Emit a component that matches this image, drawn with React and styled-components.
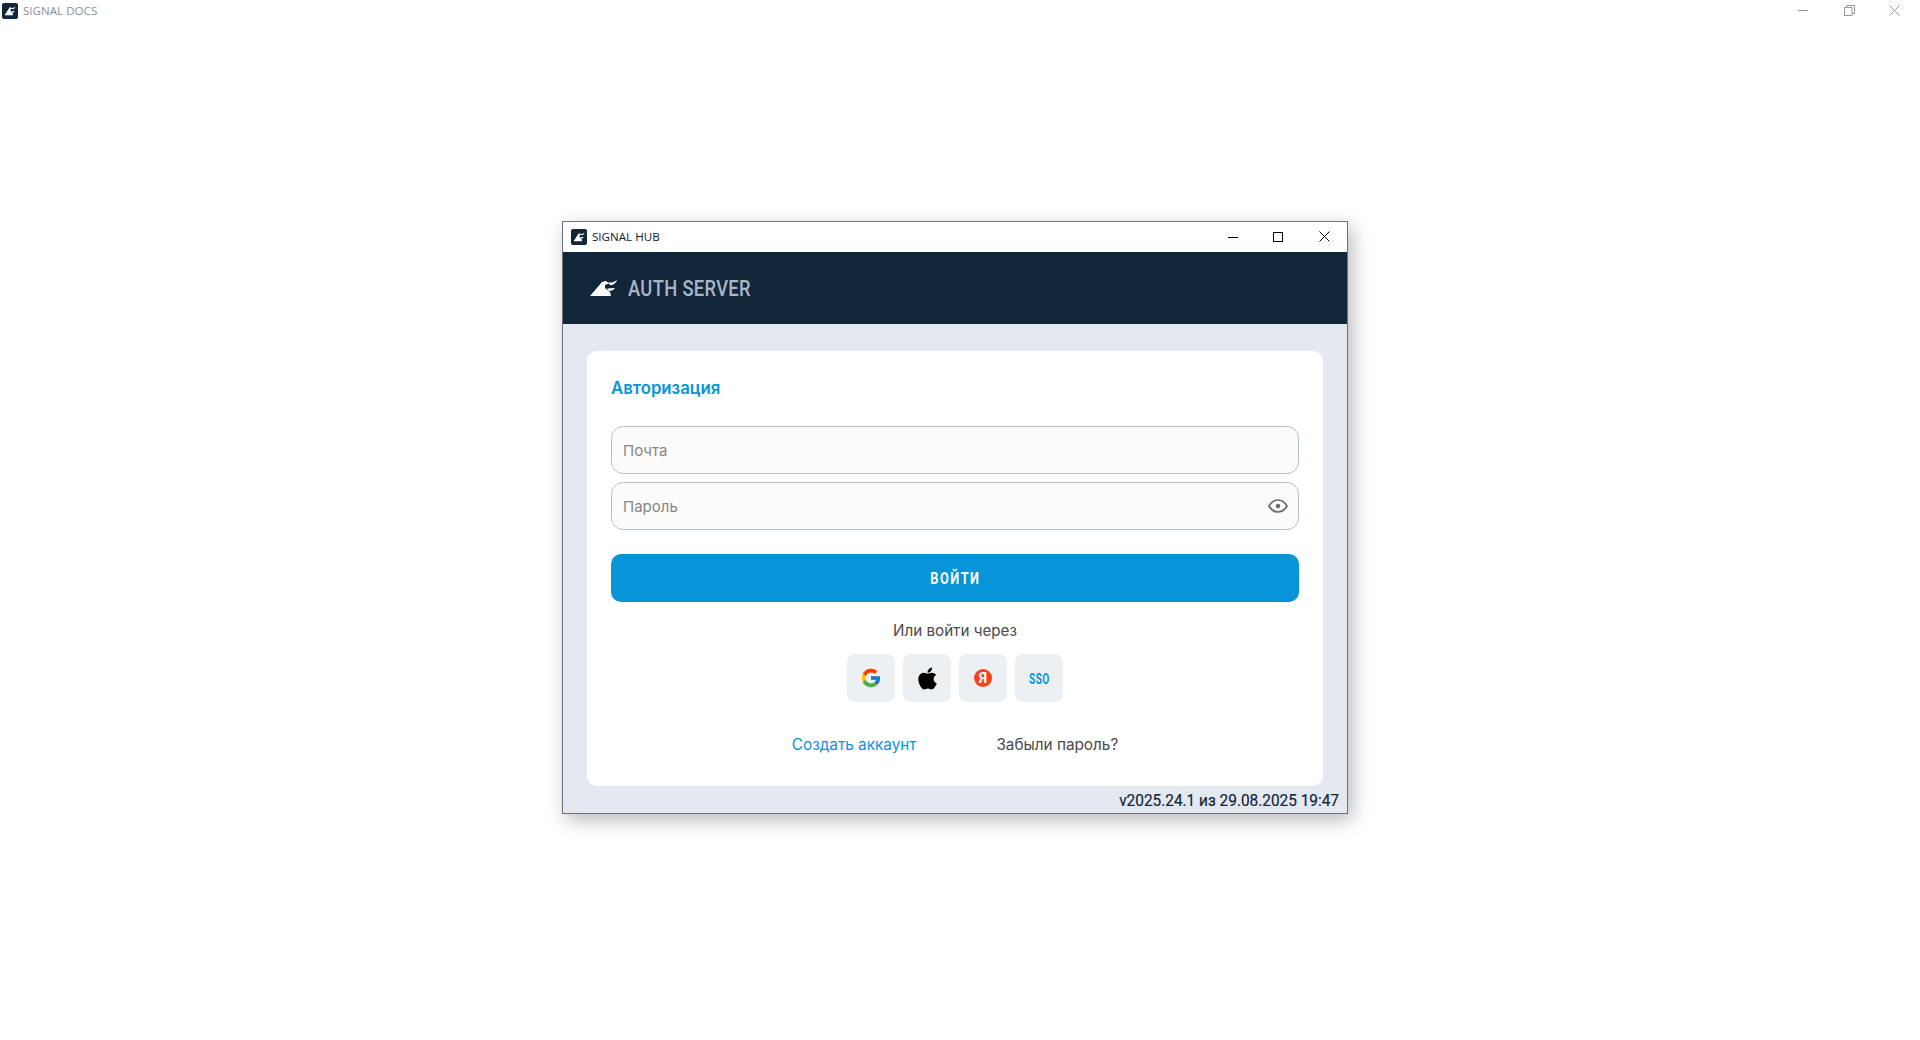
import React from 'react';
import styled, { createGlobalStyle } from 'styled-components';
import { FcGoogle } from 'react-icons/fc';
import { FaApple } from 'react-icons/fa';

const Global = createGlobalStyle`
  html, body { margin: 0; padding: 0; background: #fff; }
  * { box-sizing: border-box; }
  body { font-family: Inter, Roboto, "Noto Sans", sans-serif; }
`;

const Page = styled.div`
  width: 1920px;
  height: 1040px;
  display: flex;
  flex-direction: column;
  background: #fff;
  overflow: hidden;
`;

const OuterBar = styled.div`
  height: 21px;
  flex: none;
  display: flex;
  align-items: center;
  padding-left: 2px;
  gap: 5px;
`;

const OuterTitle = styled.span`
  font: 11.6px "Open Sans", sans-serif;
  color: #8a8f98;
`;

const OuterControls = styled.div`
  margin-left: auto;
  display: flex;
  height: 20px;
  padding-right: 2.5px;
`;

const OuterControl = styled.div`
  width: 45.5px;
  display: flex;
  align-items: center;
  justify-content: center;
  color: #9a9a9a;
`;

const Stage = styled.main`
  flex: 1;
  display: flex;
  justify-content: center;
  align-items: flex-start;
  padding: 200px 10px 0 0;
`;

const Win = styled.section`
  width: 786px;
  height: 593px;
  display: flex;
  flex-direction: column;
  border: 1px solid #6f7276;
  background: #e4e8f0;
  box-shadow: 4px 6px 18px rgba(0, 0, 0, 0.28);
`;

const WinBar = styled.div`
  height: 30px;
  flex: none;
  display: flex;
  align-items: center;
  padding: 0 0 1px 8px;
  gap: 5px;
  background: #fff;
`;

const WinTitle = styled.span`
  font: 11.6px "Open Sans", sans-serif;
  color: #10202f;
`;

const WinControls = styled.div`
  margin-left: auto;
  display: flex;
  height: 28px;
`;

const WinControl = styled.div`
  width: 46px;
  display: flex;
  align-items: center;
  justify-content: center;
  color: #000;
`;

const Brand = styled.header`
  height: 72px;
  flex: none;
  display: flex;
  align-items: center;
  padding-left: 27px;
  gap: 11px;
  background: #12263a;
`;

const BrandName = styled.h1`
  margin: 0;
  font: 500 22.5px Roboto, sans-serif;
  letter-spacing: 0.4px;
  color: #a9b6c6;
  white-space: nowrap;
  transform: scaleX(0.815);
  transform-origin: left center;
`;

const Body = styled.div`
  flex: 1;
  display: flex;
  flex-direction: column;
  padding: 27px 24px 0;
  min-height: 0;
`;

const Card = styled.div`
  width: 736px;
  height: 435px;
  flex: none;
  display: flex;
  flex-direction: column;
  padding: 25px 24px 24px;
  background: #fff;
  border-radius: 10px;
`;

const Heading = styled.h2`
  margin: 0 0 26px;
  height: 24px;
  font: 600 16.75px/24px Inter, sans-serif;
  color: #0795d8;
`;

const Field = styled.div`
  height: 48px;
  flex: none;
  display: flex;
  align-items: center;
  justify-content: space-between;
  padding: 0 10px 0 11px;
  margin-bottom: ${(p) => p.$gap}px;
  background: #fcfbf9;
  border: 1px solid #b6bfcc;
  border-radius: 12px;
`;

const Placeholder = styled.span`
  font: 400 15px Inter, sans-serif;
  color: #868686;
`;

const Submit = styled.button`
  height: 48px;
  flex: none;
  border: 0;
  padding: 0;
  border-radius: 10px;
  background: #0795d8;
`;

const SubmitLabel = styled.span`
  display: inline-block;
  color: #fff;
  font: 700 17px Roboto, sans-serif;
  letter-spacing: 2px;
  transform: scaleX(0.75);
`;

const OrText = styled.div`
  margin-top: 20px;
  text-align: center;
  font: 400 15.2px/18px Inter, sans-serif;
  color: #4a4a4a;
`;

const Socials = styled.div`
  margin-top: 14px;
  display: flex;
  justify-content: center;
  gap: 8px;
`;

const Social = styled.div`
  width: 48px;
  height: 48px;
  display: flex;
  align-items: center;
  justify-content: center;
  background: #edf0f3;
  border-radius: 8px;
`;

const YaBadge = styled.div`
  width: 18px;
  height: 18px;
  border-radius: 50%;
  display: flex;
  align-items: center;
  justify-content: center;
  background: #fc3f1d;
  color: #fff;
  font: 700 14px Roboto, sans-serif;
`;

const SsoLabel = styled.span`
  display: inline-block;
  font: 700 13px Roboto, sans-serif;
  color: #0795d8;
  letter-spacing: 0.6px;
  transform: scale(0.78, 1.18);
`;

const Links = styled.div`
  margin-top: 34px;
  display: flex;
  justify-content: center;
  gap: 80px;
  font: 400 15.3px/18px Inter, sans-serif;
`;

const CreateLink = styled.a`
  color: #0795d8;
`;

const ForgotLink = styled.a`
  color: #4a4a4a;
`;

const Version = styled.div`
  margin: 5px -16px 0 0;
  text-align: right;
  font: 400 17px/18px Roboto, sans-serif;
  color: #12263a;
  white-space: nowrap;
  transform: scaleX(0.905);
  transform-origin: right center;
  -webkit-text-stroke: 0.2px #12263a;
`;

const Mark = () => (
  <>
    <path d="M0 16 L12 2 L16 1 L19 3.5 L15 5 L15 8 L20 12 L21 16 Z" fill="#fff" />
    <path d="M18 2 C21 3.5 24 2 27 0 C26 3 23 5.5 20 5 Z" fill="#fff" />
    <path d="M17 8.5 L25 8 C24 10 21 11 19 11 Z" fill="#fff" />
  </>
);

const Logo = ({ size }) => (
  <svg width={size} height={size} viewBox="0 0 40 40">
    <rect width="40" height="40" rx="5" fill="#12263a" />
    <g transform="translate(6.5 9) scale(1 1.35)">
      <Mark />
    </g>
  </svg>
);

const BrandMark = () => (
  <svg width="27" height="16" viewBox="0 0 27 16">
    <Mark />
  </svg>
);

const Eye = () => (
  <svg width="20" height="14" viewBox="0 0 20 14" fill="none" stroke="#666a6e" strokeWidth="1.7">
    <path d="M1 7 C4 2 7 1 10 1 C13 1 16 2 19 7 C16 12 13 13 10 13 C7 13 4 12 1 7 Z" />
    <circle cx="10" cy="7" r="2.2" fill="#666a6e" stroke="none" />
  </svg>
);

export default function App() {
  return (
    <Page>
      <Global />
      <OuterBar>
        <Logo size={16} />
        <OuterTitle>SIGNAL DOCS</OuterTitle>
        <OuterControls>
          <OuterControl>
            <svg width="11" height="11" viewBox="0 0 11 11"><path d="M0 5.5h10" stroke="currentColor" /></svg>
          </OuterControl>
          <OuterControl>
            <svg width="11" height="11" viewBox="0 0 11 11" fill="none" stroke="currentColor"><rect x=".5" y="2.5" width="7.5" height="8" /><path d="M2.5 2.5V.5h8v8H8" /></svg>
          </OuterControl>
          <OuterControl>
            <svg width="11" height="11" viewBox="0 0 11 11" stroke="currentColor"><path d="M.5.5l10 10M10.5.5l-10 10" /></svg>
          </OuterControl>
        </OuterControls>
      </OuterBar>
      <Stage>
        <Win>
          <WinBar>
            <Logo size={16} />
            <WinTitle>SIGNAL HUB</WinTitle>
            <WinControls>
              <WinControl>
                <svg width="11" height="10" viewBox="0 0 11 10"><path d="M1 5.5h10" stroke="currentColor" /></svg>
              </WinControl>
              <WinControl>
                <svg width="10" height="10" viewBox="0 0 10 10" fill="none" stroke="currentColor"><rect x=".5" y=".5" width="9" height="9" /></svg>
              </WinControl>
              <WinControl>
                <svg width="11" height="11" viewBox="0 0 11 11" stroke="currentColor"><path d="M.5.5l10 10M10.5.5l-10 10" /></svg>
              </WinControl>
            </WinControls>
          </WinBar>
          <Brand>
            <BrandMark />
            <BrandName>AUTH SERVER</BrandName>
          </Brand>
          <Body>
            <Card>
              <Heading>Авторизация</Heading>
              <Field $gap={8}><Placeholder>Почта</Placeholder></Field>
              <Field $gap={24}><Placeholder>Пароль</Placeholder><Eye /></Field>
              <Submit><SubmitLabel>ВОЙТИ</SubmitLabel></Submit>
              <OrText>Или войти через</OrText>
              <Socials>
                <Social><FcGoogle size={22} /></Social>
                <Social><FaApple size={25} color="#000" /></Social>
                <Social><YaBadge>Я</YaBadge></Social>
                <Social><SsoLabel>SSO</SsoLabel></Social>
              </Socials>
              <Links>
                <CreateLink>Создать аккаунт</CreateLink>
                <ForgotLink>Забыли пароль?</ForgotLink>
              </Links>
            </Card>
            <Version>v2025.24.1 из 29.08.2025 19:47</Version>
          </Body>
        </Win>
      </Stage>
    </Page>
  );
}
